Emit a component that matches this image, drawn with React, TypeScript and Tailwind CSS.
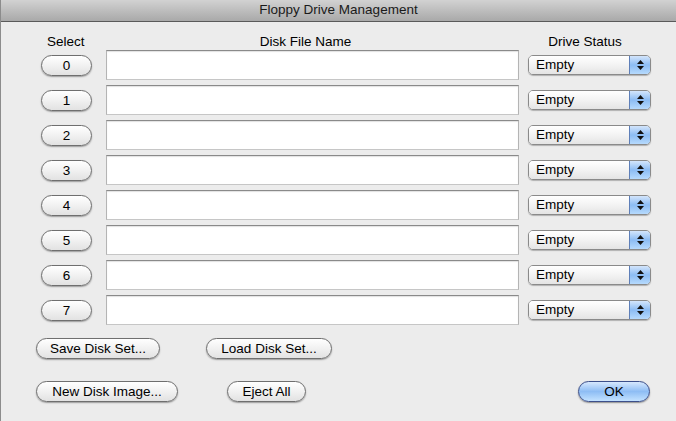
const drives = [0, 1, 2, 3, 4, 5, 6, 7]

function AquaButton({ label, className = '' }: { label: string; className?: string }) {
  return (
    <button
      className={`h-[21px] rounded-full border border-[#6f6f6f] bg-gradient-to-b from-[#ffffff] via-[#f1f1f1] to-[#e2e2e2] text-[13.5px] leading-none text-black shadow-[0_1px_1.5px_rgba(0,0,0,0.35)] ${className}`}
    >
      {label}
    </button>
  )
}

function DriveRow({ n }: { n: number }) {
  return (
    <div className="flex items-center h-[30px] mb-[5px]">
      <div className="w-[105px] pl-[40px]">
        <AquaButton label={String(n)} className="w-[51px]" />
      </div>
      <div className="w-[413px] h-[30px] bg-white border border-[#b4b4b4] border-t-[#8a8a8a] border-b-[#c6c6c6] shadow-[inset_0_1px_1px_rgba(0,0,0,0.12)]" />
      <div className="ml-[9px] w-[123px] h-[20px] flex rounded-[5px] border border-[#8a8a8a] overflow-hidden shadow-[0_1px_1px_rgba(0,0,0,0.25)]">
        <div className="flex-1 flex items-center pl-[7px] bg-gradient-to-b from-[#ffffff] via-[#f3f3f3] to-[#e4e4e4] text-[13.5px] text-black">
          Empty
        </div>
        <div className="w-[21px] flex flex-col items-center justify-center gap-[2px] border-l border-[#5e7fb8] bg-gradient-to-b from-[#d3e5fb] via-[#8cbcf3] to-[#b6dafd]">
          <svg width="7" height="4" viewBox="0 0 7 4">
            <path d="M3.5 0 L7 4 L0 4 Z" fill="#111" />
          </svg>
          <svg width="7" height="4" viewBox="0 0 7 4">
            <path d="M0 0 L7 0 L3.5 4 Z" fill="#111" />
          </svg>
        </div>
      </div>
    </div>
  )
}

export default function App() {
  return (
    <div
      className="w-[676px] h-[421px] bg-[#ececec] border-l border-[#8c8c8c] overflow-hidden"
      style={{ fontFamily: '"Liberation Sans", Arial, sans-serif' }}
    >
      <div className="h-[22px] flex items-center justify-center bg-gradient-to-b from-[#d2d2d2] to-[#a9a9a9] border-b border-[#5a5a5a] text-[13.5px] text-[#1a1a1a]">
        Floppy Drive Management
      </div>

      <div className="flex h-[28px] pt-[12px] text-[13.5px] leading-[16px] text-black">
        <div className="w-[105px] pl-[46px]">Select</div>
        <div className="w-[413px] text-center pr-[14px]">Disk File Name</div>
        <div className="ml-[9px] w-[124px] text-center pr-[10px]">Drive Status</div>
      </div>

      {drives.map((n) => (
        <DriveRow key={n} n={n} />
      ))}

      <div className="flex items-center mt-[13px] pl-[35px]">
        <AquaButton label="Save Disk Set..." className="w-[124px]" />
        <AquaButton label="Load Disk Set..." className="w-[126px] ml-[46px]" />
      </div>

      <div className="flex items-center mt-[22px] pl-[35px]">
        <AquaButton label="New Disk Image..." className="w-[142px]" />
        <AquaButton label="Eject All" className="w-[79px] ml-[49px]" />
        <button className="ml-auto mr-[26px] w-[72px] h-[21px] rounded-full border border-[#3c4f8a] bg-gradient-to-b from-[#d6e8fd] via-[#8ebdf4] to-[#c3e2ff] text-[13.5px] leading-none text-black shadow-[0_1px_1.5px_rgba(0,0,0,0.4)]">
          OK
        </button>
      </div>
    </div>
  )
}
